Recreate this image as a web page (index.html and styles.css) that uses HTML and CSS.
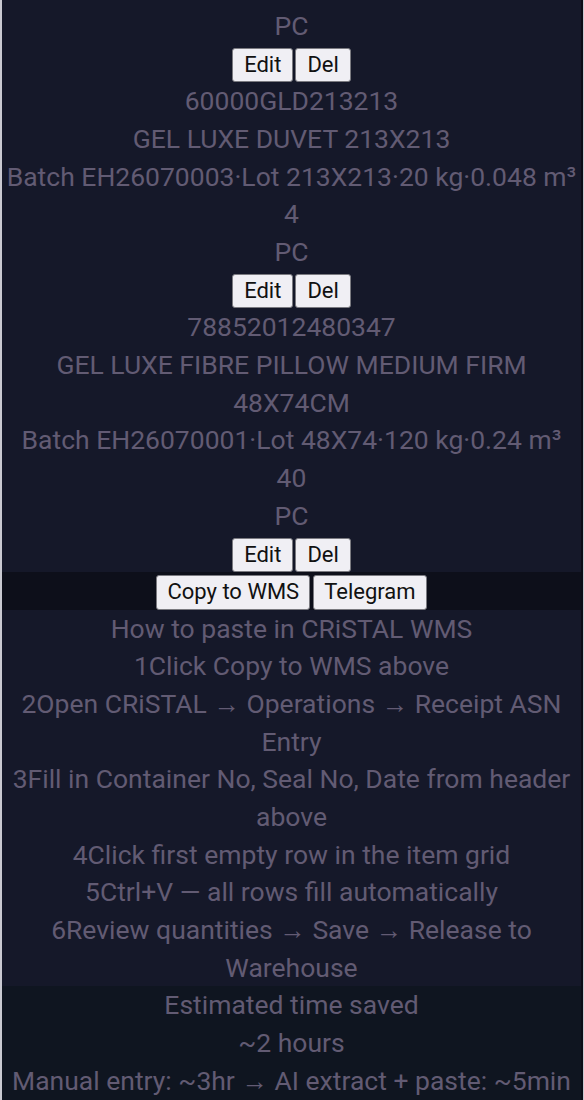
FILE: index.html
```html
<!DOCTYPE html>
<html>
<head>
<meta charset="utf-8">
<link rel="stylesheet" href="styles.css">
</head>
<body>
<div class="frame">
  <section class="items">
    <div class="line">PC</div>
    <div class="actions"><button class="btn">Edit</button><button class="btn">Del</button></div>
    <div class="line">60000GLD213213</div>
    <div class="line">GEL LUXE DUVET 213X213</div>
    <div class="line">Batch EH26070003·Lot 213X213·20 kg·0.048 m³</div>
    <div class="line">4</div>
    <div class="line">PC</div>
    <div class="actions"><button class="btn">Edit</button><button class="btn">Del</button></div>
    <div class="line">78852012480347</div>
    <div class="line">GEL LUXE FIBRE PILLOW MEDIUM FIRM 48X74CM</div>
    <div class="line">Batch EH26070001·Lot 48X74·120 kg·0.24 m³</div>
    <div class="line">40</div>
    <div class="line">PC</div>
    <div class="actions"><button class="btn">Edit</button><button class="btn">Del</button></div>
  </section>
  <div class="toolbar"><button class="btn wide">Copy to WMS</button><button class="btn wide">Telegram</button></div>
  <section class="guide">
    <div class="line">How to paste in CRiSTAL WMS</div>
    <div class="line">1Click Copy to WMS above</div>
    <div class="line">2Open CRiSTAL → Operations → Receipt ASN Entry</div>
    <div class="line">3Fill in Container No, Seal No, Date from header above</div>
    <div class="line">4Click first empty row in the item grid</div>
    <div class="line">5Ctrl+V — all rows fill automatically</div>
    <div class="line">6Review quantities → Save → Release to Warehouse</div>
  </section>
  <section class="saved">
    <div class="line">Estimated time saved</div>
    <div class="line">~2 hours</div>
    <div class="line">Manual entry: ~3hr → AI extract + paste: ~5min</div>
  </section>
</div>
</body>
</html>
```
FILE: styles.css
```css
html, body {
  margin: 0;
  padding: 0;
}
body {
  background: #c9c9d1;
  font-family: Roboto, "Liberation Sans", sans-serif;
}
.frame {
  display: flex;
  flex-direction: column;
  margin: 0 1px 0 2px;
  min-height: 1100px;
  background: #151829;
  border-right: 2px solid #0b0d16;
  color: #625b73;
  font-size: 26.5px;
  line-height: 37.65px;
  text-align: center;
}
.items {
  padding-top: 7px;
}
.line {
  padding: 0 2px;
}
.actions, .toolbar {
  display: flex;
  justify-content: center;
  align-items: flex-end;
  gap: 2px;
  height: 37.65px;
}
.toolbar {
  height: 38px;
  background: #0d0f1a;
  gap: 3px;
}
.btn {
  font-family: Roboto, "Liberation Sans", sans-serif;
  font-size: 22px;
  line-height: 26px;
  height: 34px;
  padding: 0 11px;
  background: #f0eff4;
  color: #111;
  border: 1px solid #7a7a80;
  border-radius: 3px;
}
.btn.wide {
  height: 35px;
  padding: 0 10px;
}
.guide {
  background: #151829;
}
.saved {
  flex: 1;
  background: #0f1520;
}
```
